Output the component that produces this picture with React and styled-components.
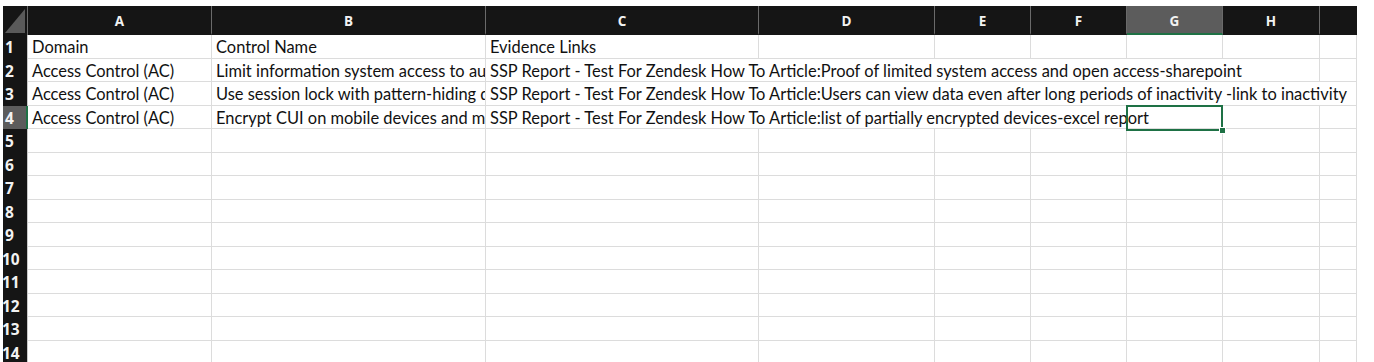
import React from "react";
import styled, { createGlobalStyle } from "styled-components";

const GlobalStyle = createGlobalStyle`
  html, body { margin: 0; padding: 0; background: #ffffff; }
  body { font-family: Lato, "Open Sans", sans-serif; overflow: hidden; }
`;

const COLS = "25px 184px 274px 273px 176px 96px 96px 96px 97px 37px";
const GREEN = "#1e7145";
const GRID = "#dcdcdc";

const Page = styled.div`
  padding: 6px 0 0 3px;
  width: 1371px;
  height: 356px;
  overflow: hidden;
`;

const Sheet = styled.div`
  display: flex;
  flex-direction: column;
  width: 1354px;
`;

const HeaderRow = styled.div`
  display: grid;
  grid-template-columns: ${COLS};
  height: 29px;
  background: #151515;
`;

const Corner = styled.div`
  border-right: 1px solid #6a6a6a;
  overflow: hidden;
  svg { display: block; }
`;

const ColHead = styled.div`
  box-sizing: border-box;
  display: flex;
  align-items: center;
  justify-content: center;
  color: #f2f2f2;
  font-family: "Open Sans", Lato, sans-serif;
  font-weight: 700;
  font-size: 13.5px;
  border-right: 1px solid ${(p) => (p.$last ? "transparent" : "#6a6a6a")};
  background: ${(p) => (p.$active ? "#5c5c5c" : "transparent")};
  border-bottom: 2px solid ${(p) => (p.$active ? GREEN : "transparent")};
  padding-top: 2px;
`;

const Row = styled.div`
  display: grid;
  grid-template-columns: ${COLS};
  grid-template-rows: 23.5px;
  height: 23.5px;
`;

const RowHead = styled.div`
  box-sizing: border-box;
  grid-row: 1;
  grid-column: 1;
  background: ${(p) => (p.$active ? "#5c5c5c" : "#151515")};
  color: #f2f2f2;
  font-family: "Open Sans", Lato, sans-serif;
  font-weight: 700;
  font-size: 15.5px;
  line-height: 23.5px;
  padding-left: ${(p) => (p.$wide ? "0" : "2px")};
  text-indent: ${(p) => (p.$wide ? "-1px" : "0")};
  overflow: hidden;
  white-space: nowrap;
  border-right: ${(p) => (p.$active ? `2px solid ${GREEN}` : "1px solid #c8c8c8")};
  padding-top: 1px;
`;

const Cell = styled.div`
  box-sizing: border-box;
  grid-row: 1;
  grid-column: ${(p) => `${p.$col} / span ${p.$span}`};
  border-right: 1px solid ${GRID};
  border-bottom: 1px solid ${GRID};
  font-family: Lato, "Open Sans", sans-serif;
  font-size: 16.45px;
  color: #111;
  white-space: nowrap;
  overflow: hidden;
  padding: 3px 0 0 4px;
  line-height: 19px;
`;

const Selection = styled.div`
  grid-row: 1;
  grid-column: ${(p) => p.$col};
  position: relative;
  margin: -1px 0 -2px -1px;
  border: 2px solid ${GREEN};
  pointer-events: none;
`;

const Handle = styled.span`
  position: absolute;
  right: -5px;
  bottom: -5px;
  width: 7px;
  height: 7px;
  background: ${GREEN};
  border: 1px solid #fff;
  box-sizing: border-box;
`;

const letters = ["A", "B", "C", "D", "E", "F", "G", "H", ""];

const rows = [
  { cells: [["Domain"], ["Control Name"], ["Evidence Links"], [""], [""], [""], [""], [""], [""]] },
  {
    cells: [
      ["Access Control (AC)"],
      ["Limit information system access to authorized users, processes acting on behalf of authorized users"],
      ["SSP Report - Test For Zendesk How To Article:Proof of limited system access and open access-sharepoint", 6],
      [""],
    ],
  },
  {
    cells: [
      ["Access Control (AC)"],
      ["Use session lock with pattern-hiding displays to prevent access and viewing of data"],
      ["SSP Report - Test For Zendesk How To Article:Users can view data even after long periods of inactivity -link to inactivity", 7],
    ],
  },
  {
    active: true,
    cells: [
      ["Access Control (AC)"],
      ["Encrypt CUI on mobile devices and mobile computing platforms"],
      ["SSP Report - Test For Zendesk How To Article:list of partially encrypted devices-excel report", 5],
      [""],
      [""],
    ],
    selection: 8,
  },
];

for (let i = 5; i <= 14; i++) {
  rows.push({ cells: Array.from({ length: 9 }, () => [""]) });
}

function placed(cells) {
  let col = 2;
  return cells.map(([text, span = 1]) => {
    const c = { text, span, col };
    col += span;
    return c;
  });
}

export default function App() {
  return (
    <Page>
      <GlobalStyle />
      <Sheet>
        <HeaderRow>
          <Corner>
            <svg width="24" height="29" viewBox="0 0 24 29">
              <polygon points="22,3 22,27 2,27" fill="#5a5a5a" />
            </svg>
          </Corner>
          {letters.map((l, i) => (
            <ColHead key={i} $active={l === "G"} $last={i === letters.length - 1}>
              {l}
            </ColHead>
          ))}
        </HeaderRow>
        {rows.map((r, ri) => (
          <Row key={ri}>
            <RowHead $active={r.active} $wide={ri + 1 >= 10}>
              {ri + 1}
            </RowHead>
            {placed(r.cells).map((c, ci) => (
              <Cell key={ci} $col={c.col} $span={c.span}>
                {c.text}
              </Cell>
            ))}
            {r.selection && (
              <Selection $col={r.selection}>
                <Handle />
              </Selection>
            )}
          </Row>
        ))}
      </Sheet>
    </Page>
  );
}
